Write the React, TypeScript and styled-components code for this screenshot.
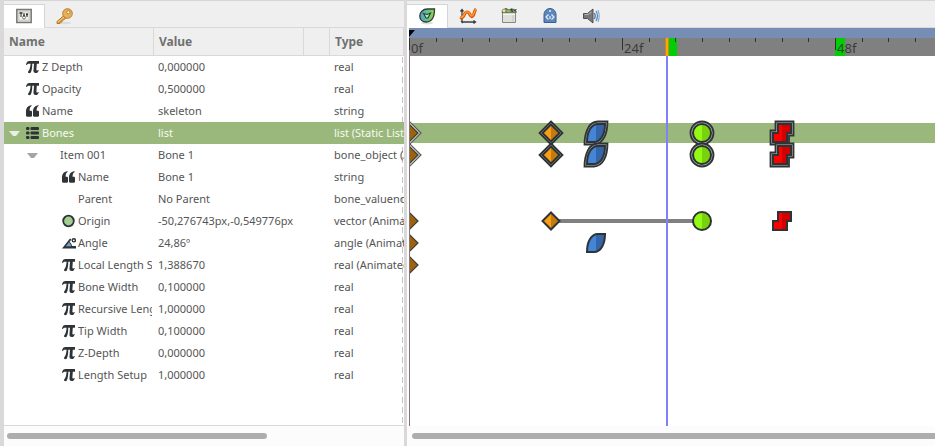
import React, { useState } from "react";
import styled, { createGlobalStyle } from "styled-components";

const FRAME_WIDTH = 8.875;
const frameX = (frame: number) => Math.round(frame * FRAME_WIDTH);
const keyX = (frame: number) => Math.ceil(frame * FRAME_WIDTH);

const GlobalStyle = createGlobalStyle`
  *, *::before, *::after { box-sizing: border-box; }
  body { margin: 0; background: #fff; color: #555; font: 11px/22px "Noto Sans", "Open Sans", sans-serif; }
  button { font: inherit; color: inherit; }
  svg { display: block; }
`;

const Workspace = styled.main`
  display: flex;
  min-height: 100vh;
  background: #fff;
`;

const ParameterPanel = styled.section`
  display: flex;
  flex-direction: column;
  flex: 0 0 407px;
  border-left: 4px solid #d9d9d9;
  border-right: 3px solid #d9d9d9;
`;

const TimelinePanel = styled.section`
  display: flex;
  flex-direction: column;
  flex: 1;
  min-width: 0;
`;

const TabBar = styled.div`
  display: flex;
  height: 28px;
  flex: none;
  padding-top: 3px;
  background: #efefef;
  border-top: 1px solid #d5d5d5;
  box-shadow: inset 0 -1px #d9d9d9;
`;

const Tab = styled.button<{ $active: boolean }>`
  display: flex;
  align-items: center;
  justify-content: center;
  width: 41px;
  padding: 0 2px 0 0;
  border: 0;
  background: ${(p) => (p.$active ? "#fff" : "transparent")};
  box-shadow: ${(p) => (p.$active ? "inset -1px 1px #d5d5d5" : "none")};
`;

const TableArea = styled.div`
  flex: 1;
  overflow: hidden;
  border-bottom: 1px solid #d9d9d9;
  background: linear-gradient(#c4c4c4 60%, transparent 60%) right 1px top 9px / 1px 10px repeat-y;
`;

const ParameterTable = styled.table`
  width: 100%;
  table-layout: fixed;
  border-collapse: separate;
  border-spacing: 0;
`;

const HeadCell = styled.th`
  height: 28px;
  padding: 0 0 0 5px;
  text-align: left;
  font-size: 12px;
  font-weight: 700;
  line-height: 27px;
  color: #707070;
  background: #efefef;
  border-right: 1px solid #d9d9d9;
  border-bottom: 1px solid #d9d9d9;
`;

const BodyRow = styled.tr<{ $selected: boolean }>`
  height: 22px;
  color: ${(p) => (p.$selected ? "#f7faf4" : "#555")};
  background: ${(p) => (p.$selected ? "#9ab87c" : "transparent")};
`;

const BodyCell = styled.td`
  height: 22px;
  padding: 0 0 0 4px;
  overflow: hidden;
  white-space: nowrap;
`;

const NameLine = styled.div<{ $level: number }>`
  display: flex;
  align-items: center;
  height: 22px;
  margin-right: 2px;
  padding-left: ${(p) => p.$level * 18}px;
  overflow: hidden;
`;

const Expander = styled.button`
  flex: 0 0 18px;
  height: 12px;
  padding: 0 0 0 1px;
  border: 0;
  background: none;
`;

const ExpanderGap = styled.span`
  flex: 0 0 18px;
`;

const IconSlot = styled.span`
  flex: 0 0 16px;
`;

const ScrollTrack = styled.div<{ $left: number; $right: number }>`
  flex: none;
  height: 20px;
  padding: 7px ${(p) => p.$right}px 7px ${(p) => p.$left}px;
  overflow: hidden;
  background: #fcfcfc;
`;

const ScrollThumb = styled.div<{ $share: number; $open?: boolean }>`
  width: ${(p) => p.$share}%;
  height: 6px;
  border-radius: ${(p) => (p.$open ? "3px 0 0 3px" : "3px")};
  background: #adadad;
`;

const Canvas = styled.div`
  display: flex;
  flex-direction: column;
  flex: 1;
  margin-left: 2px;
  position: relative;
  overflow: hidden;
`;

const RangeBar = styled.div`
  height: 10px;
  flex: none;
  background: #768eb5;
`;

const Ruler = styled.div`
  height: 18px;
  flex: none;
  position: relative;
  overflow: hidden;
  background: #808080;
`;

const Tick = styled.i<{ $major: boolean }>`
  position: absolute;
  top: 0;
  width: 1px;
  height: ${(p) => (p.$major ? 12 : 4)}px;
  background: #2f3133;
`;

const RulerLabel = styled.span`
  position: absolute;
  top: 1px;
  margin-left: 2px;
  font-size: 13px;
  line-height: 18px;
  color: #3b3b3b;
`;

const KeyframeCell = styled.i`
  position: absolute;
  top: 0;
  width: 10px;
  height: 18px;
  background: #00ce00;
`;

const Playhead = styled.i`
  position: absolute;
  top: 0;
  width: 4px;
  height: 18px;
  margin-left: -1px;
  background: #ffa500;
  border: solid #c28a28;
  border-width: 0 1px;
`;

const Tracks = styled.div`
  position: relative;
  flex: 1;
  border-left: 1px solid #8c7474;
`;

const TimeCursor = styled.i`
  position: absolute;
  top: 0;
  bottom: 0;
  width: 2px;
  margin-left: -1px;
  background: #8080ff;
`;

const Track = styled.div<{ $selected: boolean }>`
  position: relative;
  height: 22px;
  border: solid transparent;
  border-width: 1px 0;
  background: ${(p) => (p.$selected ? "#9ab87c" : "transparent")};
  background-clip: padding-box;
`;

const Marker = styled.span`
  position: absolute;
  top: -3px;
  width: 26px;
  margin-left: -14px;
`;

const Span = styled.i`
  position: absolute;
  top: 8px;
  height: 4px;
  background: #808080;
`;

const StartMark = styled.svg`
  position: absolute;
  top: -2px;
  left: 0;
`;

type IconKind = "pi" | "quote" | "list" | "circle" | "angle";

function TypeIcon({ kind }: { kind: IconKind }) {
  return (
    <svg width="14" height="14" viewBox="0 0 14 14" fill="#2e3436">
      {kind === "pi" && (
        <path d="M0 4.800C.5 2 1.600 1 3.600 1H13v2.700h-2.200l-.4 5.700c-.1 1.300.8 1.500 1.700.5l.7.4c-.7 2-1.600 2.800-3 2.800-1.900 0-2.500-1.200-2.300-3l.5-6.400H6.300C6.200 7.300 5.900 10 5 12c-.5 1.200-1.300 1.400-2.200 1.100-1-.3-1.100-1.400-.3-2.200C3.800 9.600 4.300 6.800 4.600 3.700H3C1.800 3.700 1.300 4 .9 5z" />
      )}
      {kind === "quote" && (
        <>
          <path d="M5.500 1v1C4 3 3.600 4.600 3.600 6.800h1.200c.8 0 1.200.4 1.200 1.200v3.600c0 .8-.4 1.200-1.200 1.200H1.200C.4 12.800 0 12.400 0 11.600V7.500C0 4.300 1.600 1.800 5.500 1z" />
          <path d="M12.500 1v1c-1.500 1-1.900 2.600-1.900 4.800h1.200c.8 0 1.200.4 1.200 1.200v3.600c0 .8-.4 1.200-1.200 1.200H8.200c-.8 0-1.200-.4-1.200-1.200V7.500C7 4.300 8.600 1.800 12.500 1z" />
        </>
      )}
      {kind === "list" &&
        [1, 5.5, 10].map((y) => (
          <g key={y}>
            <rect x="0" y={y} width="3.500" height="3" rx="1" />
            <rect x="4.500" y={y} width="8.500" height="3" rx="1" />
          </g>
        ))}
      {kind === "circle" && <circle cx="6.500" cy="7" r="5.300" fill="#a3cf91" stroke="#2e3436" strokeWidth="1.800" />}
      {kind === "angle" && (
        <>
          <path d="M0 12.500 8 2.500l1.400 1.100L7.500 6C9 7 9.800 8.400 10 10h4.500v2.500z" />
          <path d="M6.800 6.600C8.200 7.500 9 8.800 9.200 10.300H3.800z" fill="#729fcf" />
          <circle cx="11.800" cy="4.300" r="1.600" fill="none" stroke="#2e3436" strokeWidth="1.400" />
        </>
      )}
    </svg>
  );
}

function ExpanderIcon({ selected }: { selected: boolean }) {
  return (
    <svg width="11" height="12" viewBox="0 0 11 12">
      <path d="M0 4h11L7 9H4z" fill={selected ? "#e9efe3" : "#a5a5a5"} />
    </svg>
  );
}

type ShapeKind = "diamond" | "leaf" | "circle" | "step";

const SHAPES: Record<ShapeKind, { d: string; light: string; dark: string }> = {
  diamond: { d: "M13 4.500 21.500 13 13 21.500 4.500 13z", light: "#f99d14", dark: "#c47a0c" },
  leaf: { d: "M22 4H15C8 4 4 12 4 22h7c7 0 11-8 11-18z", light: "#4485d8", dark: "#3465a9" },
  circle: { d: "M13 4a9 9 0 1 1 0 18 9 9 0 0 1 0-18z", light: "#93fa14", dark: "#78d30c" },
  step: { d: "M9 4H22V13H18V22H4V13H9z", light: "#ff0000", dark: "#d20000" },
};

const DOUBLE_OUTLINES: Record<ShapeKind, string> = {
  diamond: "M13 1.500 24.500 13 13 24.500 1.500 13z",
  leaf: "M24.500 1.500H15C6 1.500 1.500 12 1.500 24.500H11c9 0 13.500-10.500 13.500-23z",
  circle: "M13 1.500a11.500 11.500 0 1 1 0 23 11.500 11.500 0 0 1 0-23z",
  step: "M6.500 1.500H24.500V15.500H20V24.500H1.500V10.500H6.500z",
};

function KeyShape({ shape, grouped }: { shape: ShapeKind; grouped: boolean }) {
  const { d, light, dark } = SHAPES[shape];
  const clip = `half-${shape}`;
  return (
    <svg width="26" height="26" viewBox="0 0 26 26">
      <defs>
        <clipPath id={clip}><path d="M13 0h13v26H13z" /></clipPath>
      </defs>
      {grouped && (
        <path d={DOUBLE_OUTLINES[shape]} fill="#b4b9b2" stroke="#2e3436" strokeWidth="1.800" />
      )}
      <path d={d} fill={light} />
      <path d={d} fill={dark} clipPath={`url(#${clip})`} />
      <path d={d} fill="none" stroke="#2e3436" strokeWidth="2" />
    </svg>
  );
}

function FirstKey({ grouped }: { grouped: boolean }) {
  return (
    <StartMark width="13" height="24" viewBox="0 0 13 24">
      {grouped && <path d="M-1 0 11 12-1 24" fill="#d2d5d0" stroke="#555b58" strokeWidth="1.200" />}
      <path d="M-1 3 8 12-1 21" fill="#9d620e" stroke="#3b3b36" strokeWidth="1.200" />
    </StartMark>
  );
}

function ParametersIcon() {
  return (
    <svg width="16" height="16" viewBox="0 0 16 16">
      <path d="M.8 1.500h14.400v13H.8z" fill="#deded9" stroke="#777a75" strokeWidth="1.500" />
      <path d="M3 4h10v8H3z" fill="#f4f4f1" stroke="#babdb6" strokeWidth=".6" />
      <path d="M5 5v4M8 5v4M11 5v4" stroke="#555753" strokeWidth="1.300" />
      <path d="M3.500 5h3M7 7.500h2M10 6.500h2" stroke="#2e3436" strokeWidth="1.400" />
      <circle cx="8" cy="9.500" r="1.500" fill="none" stroke="#777" />
    </svg>
  );
}

function KeyIcon() {
  return (
    <svg width="17" height="17" viewBox="0 0 17 17">
      <ellipse cx="9" cy="15" rx="6" ry="1.300" fill="#dcdcdc" />
      <path d="M8 7.500 1 13.500v2h3v-1.500h2V12h1.500l2.500-2z" fill="#e3a649" stroke="#b47823" />
      <circle cx="11.500" cy="5.500" r="4.800" fill="#e9b156" stroke="#b97c27" />
      <circle cx="12.300" cy="4.300" r="1.600" fill="#f4f1e9" stroke="#a8712a" strokeWidth=".8" />
      <path d="M2 14 8 9" stroke="#f3ca83" />
    </svg>
  );
}

function TimetrackIcon() {
  return (
    <svg width="18" height="18" viewBox="0 0 18 18">
      <defs>
        <linearGradient id="leaf" x1="0" y1=".5" x2="1" y2=".5">
          <stop offset="0" stopColor="#5b9bd5" /><stop offset=".5" stopColor="#5cc48a" /><stop offset="1" stopColor="#9bd33a" />
        </linearGradient>
      </defs>
      <ellipse cx="9" cy="16" rx="6" ry="1.500" fill="#ddd" />
      <path d="M16.500 2H9.500C4.500 2 1.800 5.500 1.800 9s2.500 6 6.500 6C14 15 16.500 10 16.500 2z" fill="url(#leaf)" stroke="#2e3d36" strokeWidth="1.300" />
      <path d="M5.500 6.500 9 7.500 12.500 6 10 11H8z" fill="#b7dfba" stroke="#263b38" strokeWidth="1.100" />
    </svg>
  );
}

function GraphIcon() {
  return (
    <svg width="18" height="18" viewBox="0 0 18 18">
      <path d="M3 3v12h13M1.500 4.500 3 2.500l1.500 2M14.500 13.500l2 1.500-2 1.500M2 14l2 2" fill="none" stroke="#3b3e3f" strokeWidth="1.300" />
      <path d="M1 10.500C6 12 4.500 5 8 5S10.500 10 13 9.500 15 3.500 17 2" fill="none" stroke="#d95208" strokeWidth="3.200" />
      <path d="M1 10.200C6 11.500 4.500 4.700 8 4.700S10.500 9.700 13 9 15 3.500 17 2" fill="none" stroke="#fc9b32" strokeWidth="1.500" />
    </svg>
  );
}

function LibraryIcon() {
  return (
    <svg width="18" height="18" viewBox="0 0 18 18">
      <path d="M2 5.500 3 3l3-1.500L9 3l4-1 3 2v2z" fill="#7f9a68" stroke="#4d5a46" />
      <circle cx="4" cy="3.800" r="1.800" fill="#efe59a" stroke="#77754a" strokeWidth=".6" />
      <circle cx="8.500" cy="4" r="1.300" fill="#86c259" />
      <path d="M11 1.500 12.500 5M14 3.500l2.500-1" stroke="#334139" strokeWidth="1.300" />
      <path d="M2.500 6h13v9.500h-13z" fill="#dfe0da" stroke="#858883" />
      <path d="M3 6.500h12V8H3z" fill="#f6f6f2" />
      <path d="M13 8v7" stroke="#c4c6c1" />
    </svg>
  );
}

function MetadataIcon() {
  return (
    <svg width="18" height="18" viewBox="0 0 18 18">
      <path d="M3 15.500V7.500C3 4.500 5.500 1.500 9 1.500s6 3 6 6v8z" fill="#5d86bd" stroke="#385f99" strokeLinejoin="round" />
      <circle cx="9" cy="4" r="1.100" fill="#dce7f4" />
      <path d="M7.500 7.500 5 10l2.500 2.500M10.500 7.500 13 10l-2.500 2.500M9 9v3" fill="none" stroke="#e7eff8" strokeWidth="1.200" />
    </svg>
  );
}

function SoundIcon() {
  return (
    <svg width="18" height="18" viewBox="0 0 18 18">
      <path d="M1.500 6.500h4L11 2v14L5.500 11.500h-4z" fill="#777a77" stroke="#4e514f" />
      <path d="M2.500 7.500h3.500L9.500 5" fill="none" stroke="#b8bab8" />
      <path d="M12.500 6c1 2 1 4 0 6" fill="none" stroke="#426da8" strokeWidth="1.300" />
      <path d="M14 4c1.800 3 1.800 7 0 10" fill="none" stroke="#5c87bd" strokeWidth="1.300" />
      <path d="M16 3c1.600 4 1.600 8 0 12" fill="none" stroke="#8cacd2" strokeWidth="1.200" />
    </svg>
  );
}

interface Parameter {
  name: string;
  value: string;
  type: string;
  level: number;
  icon?: IconKind;
  expandable?: boolean;
  selected?: boolean;
  start?: boolean;
  keys?: { frame: number; shape: ShapeKind }[];
}

const ALL_KEYS: { frame: number; shape: ShapeKind }[] = [
  { frame: 16, shape: "diamond" },
  { frame: 21, shape: "leaf" },
  { frame: 33, shape: "circle" },
  { frame: 42, shape: "step" },
];

const PARAMETERS: Parameter[] = [
  { name: "Z Depth", value: "0,000000", type: "real", level: 0, icon: "pi" },
  { name: "Opacity", value: "0,500000", type: "real", level: 0, icon: "pi" },
  { name: "Name", value: "skeleton", type: "string", level: 0, icon: "quote" },
  { name: "Bones", value: "list", type: "list (Static List)", level: 0, icon: "list", expandable: true, selected: true, start: true, keys: ALL_KEYS },
  { name: "Item 001", value: "Bone 1", type: "bone_object (Animated)", level: 1, expandable: true, start: true, keys: ALL_KEYS },
  { name: "Name", value: "Bone 1", type: "string", level: 2, icon: "quote" },
  { name: "Parent", value: "No Parent", type: "bone_valuenode", level: 2 },
  { name: "Origin", value: "-50,276743px,-0,549776px", type: "vector (Animated)", level: 2, icon: "circle", start: true, keys: ALL_KEYS.filter((k) => k.shape !== "leaf") },
  { name: "Angle", value: "24,86º", type: "angle (Animated)", level: 2, icon: "angle", start: true, keys: [ALL_KEYS[1]] },
  { name: "Local Length Scale", value: "1,388670", type: "real (Animated)", level: 2, icon: "pi", start: true },
  { name: "Bone Width", value: "0,100000", type: "real", level: 2, icon: "pi" },
  { name: "Recursive Length Scale", value: "1,000000", type: "real", level: 2, icon: "pi" },
  { name: "Tip Width", value: "0,100000", type: "real", level: 2, icon: "pi" },
  { name: "Z-Depth", value: "0,000000", type: "real", level: 2, icon: "pi" },
  { name: "Length Setup", value: "1,000000", type: "real", level: 2, icon: "pi" },
];

const TIMELINE_TABS = [
  { label: "Timetrack", Icon: TimetrackIcon },
  { label: "Graphs", Icon: GraphIcon },
  { label: "Library", Icon: LibraryIcon },
  { label: "Canvas MetaData", Icon: MetadataIcon },
  { label: "Sound", Icon: SoundIcon },
];

const TICKS = Array.from({ length: 81 }, (_, i) => i * 3);
const CURRENT_FRAME = 29;

export default function App() {
  const [leftTab, setLeftTab] = useState(0);
  const [rightTab, setRightTab] = useState(0);
  return (
    <Workspace>
      <GlobalStyle />
      <ParameterPanel>
        <TabBar role="tablist">
          <Tab role="tab" aria-label="Parameters" aria-selected={leftTab === 0} $active={leftTab === 0} onClick={() => setLeftTab(0)}><ParametersIcon /></Tab>
          <Tab role="tab" aria-label="Keyframes" aria-selected={leftTab === 1} $active={leftTab === 1} onClick={() => setLeftTab(1)}><KeyIcon /></Tab>
        </TabBar>
        <TableArea>
          <ParameterTable>
            <colgroup>
              <col width="150" /><col width="150" /><col width="26" /><col />
            </colgroup>
            <thead>
              <tr><HeadCell>Name</HeadCell><HeadCell>Value</HeadCell><HeadCell /><HeadCell>Type</HeadCell></tr>
            </thead>
            <tbody>
              {PARAMETERS.map((p, i) => (
                <BodyRow key={i} $selected={!!p.selected}>
                  <BodyCell>
                    <NameLine $level={p.level}>
                      {p.expandable ? <Expander aria-label={`Collapse ${p.name}`} aria-expanded><ExpanderIcon selected={!!p.selected} /></Expander> : <ExpanderGap />}
                      <IconSlot>{p.icon && <TypeIcon kind={p.icon} />}</IconSlot>
                      {p.name}
                    </NameLine>
                  </BodyCell>
                  <BodyCell>{p.value}</BodyCell>
                  <BodyCell />
                  <BodyCell>{p.type}</BodyCell>
                </BodyRow>
              ))}
            </tbody>
          </ParameterTable>
        </TableArea>
        <ScrollTrack $left={3} $right={3}><ScrollThumb $share={66} /></ScrollTrack>
      </ParameterPanel>
      <TimelinePanel>
        <TabBar role="tablist">
          {TIMELINE_TABS.map(({ label, Icon }, i) => (
            <Tab key={label} role="tab" aria-label={label} aria-selected={rightTab === i} $active={rightTab === i} onClick={() => setRightTab(i)}><Icon /></Tab>
          ))}
        </TabBar>
        <Canvas>
          <RangeBar>
            <svg width="7" height="10" viewBox="0 0 7 10"><path d="M0 2h6L0 9z" fill="#000" /></svg>
          </RangeBar>
          <Ruler>
            {[CURRENT_FRAME, 48].map((f) => <KeyframeCell key={f} style={{ left: keyX(f) }} />)}
            {TICKS.map((f) => <Tick key={f} $major={f % 24 === 0} style={{ left: frameX(f) }} />)}
            {TICKS.filter((f) => f % 24 === 0).map((f) => <RulerLabel key={f} style={{ left: frameX(f) }}>{f}f</RulerLabel>)}
            <Playhead style={{ left: frameX(CURRENT_FRAME) }} />
          </Ruler>
          <Tracks>
            {PARAMETERS.map((p, i) => (
              <Track key={i} $selected={!!p.selected}>
                {p.name === "Origin" && <Span style={{ left: keyX(16), width: keyX(17) }} />}
                {p.start && <FirstKey grouped={p.level < 2} />}
                {p.keys?.map((k) => (
                  <Marker key={k.frame} style={{ left: keyX(k.frame) }}><KeyShape shape={k.shape} grouped={p.level < 2} /></Marker>
                ))}
              </Track>
            ))}
            <TimeCursor style={{ left: frameX(CURRENT_FRAME) }} />
          </Tracks>
        </Canvas>
        <ScrollTrack $left={5} $right={0}><ScrollThumb $share={100} $open /></ScrollTrack>
      </TimelinePanel>
    </Workspace>
  );
}
